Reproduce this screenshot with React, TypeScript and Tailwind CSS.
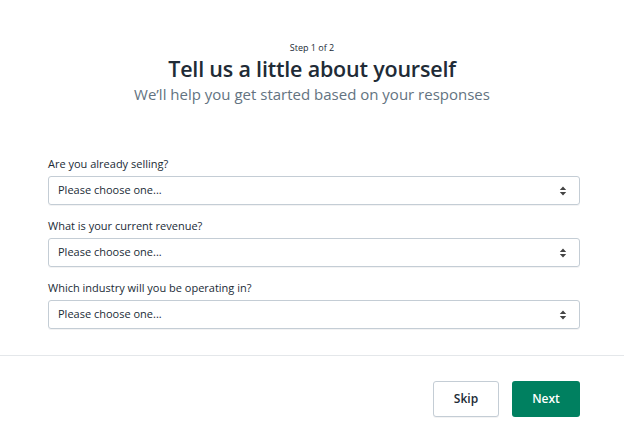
const questions = [
  "Are you already selling?",
  "What is your current revenue?",
  "Which industry will you be operating in?",
];

const SortIcon = () => (
  <svg width="8" height="10" viewBox="0 0 8 10" className="text-[#444]">
    <path d="M4 0.5L7.2 4H0.8z M4 9.5L0.8 6H7.2z" fill="currentColor" />
  </svg>
);

const App = () => {
  return (
    <div
      className="w-[624px] h-[441px] bg-white text-[#212b36] flex flex-col"
      style={{ fontFamily: '"Open Sans", "Noto Sans", sans-serif' }}
    >
      <div className="flex flex-col items-center pt-[42px]">
        <p className="text-[9px] leading-[12px] text-[#212b36]">Step 1 of 2</p>
        <h1 className="text-[21.5px] leading-[29px] font-semibold tracking-[-0.2px]">
          Tell us a little about yourself
        </h1>
        <p className="text-[15px] leading-[20px] mt-[1px] text-[#637381]">
          We’ll help you get started based on your responses
        </p>
      </div>

      <div className="flex flex-col gap-[14px] pl-[48px] pr-[44px] pt-[53px] pb-[26px] border-b border-[#e4e7ea]">
        {questions.map((q) => (
          <div key={q} className="flex flex-col gap-[5px]">
            <label className="text-[11px] leading-[14px]">{q}</label>
            <div className="h-[29px] flex items-center justify-between rounded-[3px] border border-[#c4cdd5] shadow-[0_1px_0_rgba(22,29,37,0.05)] pl-[9px] pr-[12px]">
              <span className="text-[11px]">Please choose one...</span>
              <SortIcon />
            </div>
          </div>
        ))}
      </div>

      <div className="flex justify-end gap-[13px] px-[44px] pt-[25px] pb-[24px] border-b border-[#e4e7ea]">
        <button className="w-[66px] h-[36px] rounded-[3px] border border-[#c4cdd5] bg-white text-[12px] font-semibold text-[#212b36] shadow-[0_1px_0_rgba(22,29,37,0.05)]">
          Skip
        </button>
        <button className="w-[68px] h-[36px] rounded-[3px] bg-[#008060] text-[12px] font-semibold text-white">
          Next
        </button>
      </div>
    </div>
  );
};

export default App;
